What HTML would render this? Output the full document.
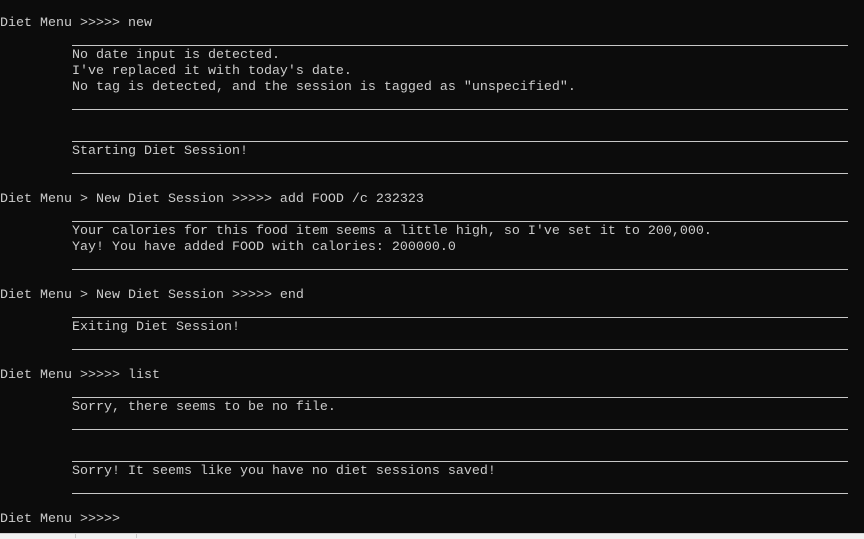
<!DOCTYPE html>
<html><head><style>
html,body{margin:0;padding:0;background:#0c0c0c;width:864px;height:538px;overflow:hidden;}
.r{position:absolute;left:0;height:16px;line-height:16px;padding-top:2px;font-family:"Liberation Mono",monospace;font-size:13.33px;color:#cccccc;white-space:pre;}
.u{position:absolute;left:72px;width:776px;height:1px;background:#c8c8c8;}
.bar{position:absolute;left:0;top:533px;width:864px;height:5px;background:#f0f0f0;border-top:1px solid #d0d0d0;}
.d{position:absolute;top:534px;width:1px;height:4px;background:#c8c8c8;}
</style></head><body>
<div class="r" style="top:14px">Diet Menu &gt;&gt;&gt;&gt;&gt; new</div>
<div class="u" style="top:45px"></div>
<div class="r" style="top:46px">         No date input is detected.</div>
<div class="r" style="top:62px">         I've replaced it with today's date.</div>
<div class="r" style="top:78px">         No tag is detected, and the session is tagged as "unspecified".</div>
<div class="u" style="top:109px"></div>
<div class="u" style="top:141px"></div>
<div class="r" style="top:142px">         Starting Diet Session!</div>
<div class="u" style="top:173px"></div>
<div class="r" style="top:190px">Diet Menu &gt; New Diet Session &gt;&gt;&gt;&gt;&gt; add FOOD /c 232323</div>
<div class="u" style="top:221px"></div>
<div class="r" style="top:222px">         Your calories for this food item seems a little high, so I've set it to 200,000.</div>
<div class="r" style="top:238px">         Yay! You have added FOOD with calories: 200000.0</div>
<div class="u" style="top:269px"></div>
<div class="r" style="top:286px">Diet Menu &gt; New Diet Session &gt;&gt;&gt;&gt;&gt; end</div>
<div class="u" style="top:317px"></div>
<div class="r" style="top:318px">         Exiting Diet Session!</div>
<div class="u" style="top:349px"></div>
<div class="r" style="top:366px">Diet Menu &gt;&gt;&gt;&gt;&gt; list</div>
<div class="u" style="top:397px"></div>
<div class="r" style="top:398px">         Sorry, there seems to be no file.</div>
<div class="u" style="top:429px"></div>
<div class="u" style="top:461px"></div>
<div class="r" style="top:462px">         Sorry! It seems like you have no diet sessions saved!</div>
<div class="u" style="top:493px"></div>
<div class="r" style="top:510px">Diet Menu &gt;&gt;&gt;&gt;&gt;</div>
<div class="bar"></div>
<div class="d" style="left:75px"></div>
<div class="d" style="left:136px"></div>
</body></html>
